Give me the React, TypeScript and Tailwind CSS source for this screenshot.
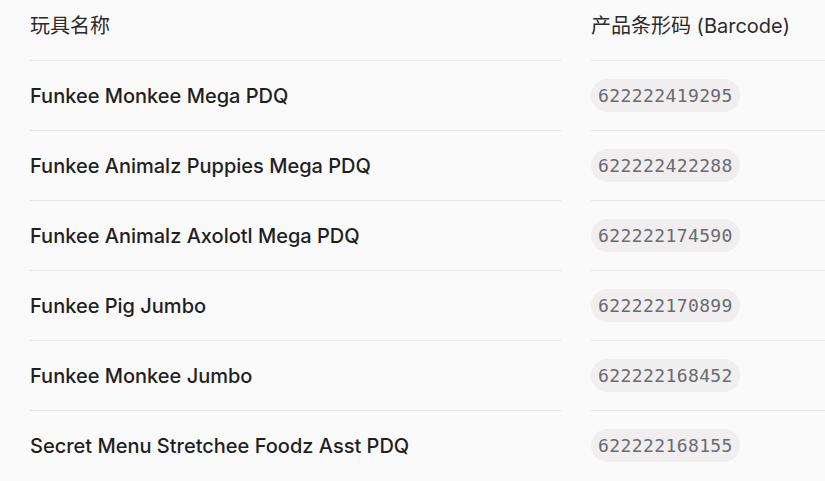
const rows = [
  { name: "Funkee Monkee Mega PDQ", code: "622222419295" },
  { name: "Funkee Animalz Puppies Mega PDQ", code: "622222422288" },
  { name: "Funkee Animalz Axolotl Mega PDQ", code: "622222174590" },
  { name: "Funkee Pig Jumbo", code: "622222170899" },
  { name: "Funkee Monkee Jumbo", code: "622222168452" },
  { name: "Secret Menu Stretchee Foodz Asst PDQ", code: "622222168155" },
];

export default function App() {
  return (
    <div className="w-[825px] h-[481px] overflow-hidden bg-[#fafafa] text-[#1f1f1f] font-['Inter','Noto_Sans_CJK_SC',sans-serif]">
      <div className="grid grid-cols-[531px_300px] gap-x-[30px] pl-[30px]">
        <div className="h-[60px] flex items-center pb-[8px] text-[20px] text-[#2b2b2b]">
          玩具名称
        </div>
        <div className="h-[60px] flex items-center pb-[8px] text-[20px] text-[#2b2b2b]">
          产品条形码 (Barcode)
        </div>
        {rows.map((r) => (
          <>
            <div
              key={r.code + "n"}
              className="h-[70px] border-t border-[#e6e6e6] flex items-center text-[20px] font-medium"
            >
              {r.name}
            </div>
            <div
              key={r.code + "c"}
              className="h-[70px] border-t border-[#e6e6e6] flex items-center"
            >
              <span className="rounded-full bg-[#f0eeee] px-[7px] py-[5px] leading-[23px] text-[18px] text-[#686b70] font-['DejaVu_Sans_Mono',monospace] tracking-[0.4px]">
                {r.code}
              </span>
            </div>
          </>
        ))}
      </div>
    </div>
  );
}
